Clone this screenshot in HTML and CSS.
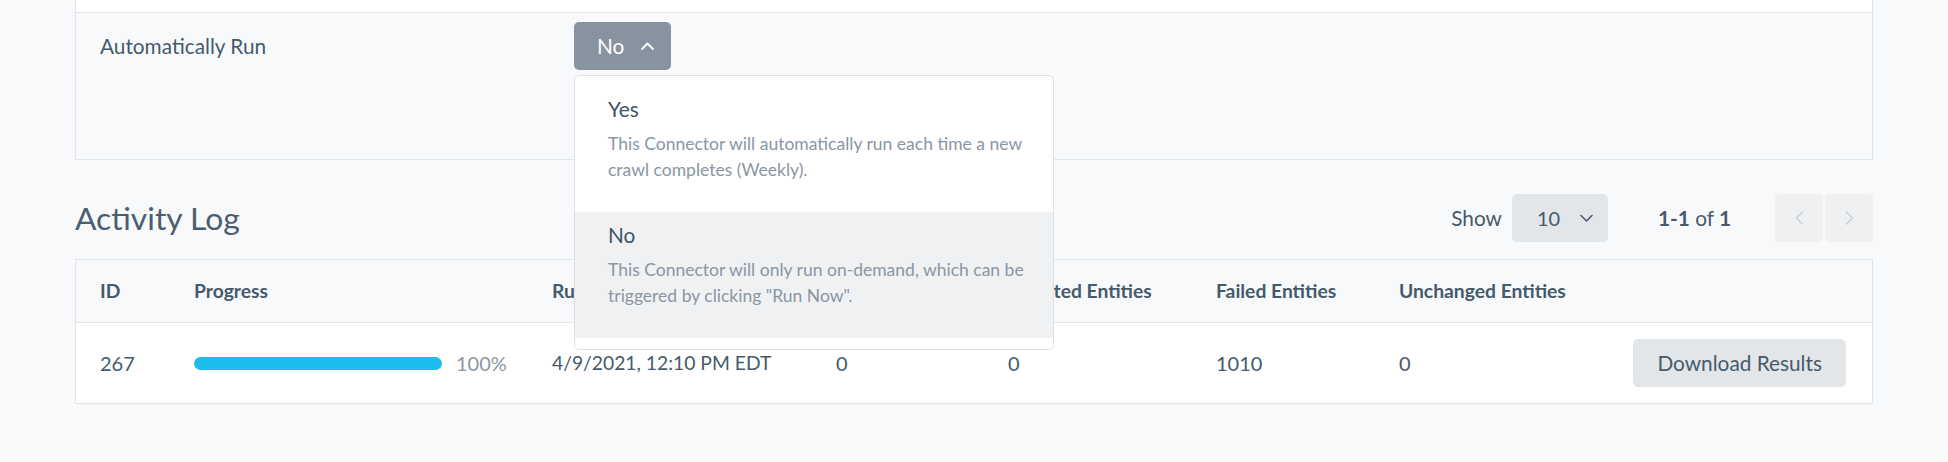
FILE: index.html
```html
<!DOCTYPE html>
<html lang="en">
<head>
<meta charset="utf-8">
<title>Connector Settings</title>
<link rel="stylesheet" href="styles.css">
</head>
<body>
<div class="page">
  <section class="panel">
    <div class="panel-top"></div>
    <div class="setting-row">
      <div class="setting-label">Automatically Run</div>
      <div class="select-wrap">
        <button class="toggle">
          <span>No</span>
          <svg class="chev" width="13" height="8" viewBox="0 0 13 8"><path d="M1 7 L6.5 1.5 L12 7" fill="none" stroke="#ffffff" stroke-width="1.8" stroke-linecap="round" stroke-linejoin="round"/></svg>
        </button>
        <div class="menu">
          <div class="menu-item">
            <div class="item-title">Yes</div>
            <div class="item-desc">This Connector will automatically run each time a new crawl completes (Weekly).</div>
          </div>
          <div class="menu-item active">
            <div class="item-title">No</div>
            <div class="item-desc">This Connector will only run on-demand, which can be triggered by clicking "Run Now".</div>
          </div>
        </div>
      </div>
    </div>
  </section>

  <div class="log-header">
    <h2 class="log-title">Activity Log</h2>
    <div class="controls">
      <span class="show-label">Show</span>
      <div class="per-page">
        <span class="num">10</span>
        <svg class="chev" width="13" height="8" viewBox="0 0 13 8"><path d="M1 1.5 L6.5 7 L12 1.5" fill="none" stroke="#4a5d6e" stroke-width="1.6" stroke-linecap="round" stroke-linejoin="round"/></svg>
      </div>
      <div class="count"><b>1-1</b> of <b>1</b></div>
      <div class="pager">
        <button class="page-btn"><svg width="9" height="14" viewBox="0 0 9 14"><path d="M7.5 1 L1.5 7 L7.5 13" fill="none" stroke="#c9ced4" stroke-width="1.5" stroke-linecap="round" stroke-linejoin="round"/></svg></button>
        <button class="page-btn"><svg width="9" height="14" viewBox="0 0 9 14"><path d="M1.5 1 L7.5 7 L1.5 13" fill="none" stroke="#c9ced4" stroke-width="1.5" stroke-linecap="round" stroke-linejoin="round"/></svg></button>
      </div>
    </div>
  </div>

  <div class="table">
    <div class="row head">
      <div>ID</div>
      <div>Progress</div>
      <div>Run Date</div>
      <div>Created Entities</div>
      <div>Updated Entities</div>
      <div>Failed Entities</div>
      <div>Unchanged Entities</div>
      <div></div>
    </div>
    <div class="row body">
      <div class="num">267</div>
      <div class="progress"><span class="bar"></span><span class="pct num">100%</span></div>
      <div class="num date">4/9/2021, 12:10 PM EDT</div>
      <div class="num">0</div>
      <div class="num">0</div>
      <div class="num">1010</div>
      <div class="num">0</div>
      <div><button class="download">Download Results</button></div>
    </div>
  </div>
</div>
</body>
</html>
```

FILE: styles.css
```css
* { box-sizing: border-box; }

html, body {
  margin: 0;
  padding: 0;
  background: #f8f9fb;
  font-family: Lato, "Open Sans", "Liberation Sans", sans-serif;
  color: #465a6b;
  font-size: 20.8px;
  line-height: 24px;
}

.page {
  padding: 0 75px;
  height: 462px;
  overflow: hidden;
}

.num {
  font-size: 20px;
}

.date {
  font-size: 19.3px;
}

.panel {
  border-left: 1px solid #e1e4e8;
  border-right: 1px solid #e1e4e8;
  border-bottom: 1px solid #e1e4e8;
}

.panel-top {
  height: 13px;
  background: #ffffff;
  border-bottom: 1px solid #e1e4e8;
}

.setting-row {
  display: flex;
  align-items: flex-start;
  height: 146px;
  padding: 9px 0 0 24px;
  background: #f8f9fb;
}

.setting-label {
  width: 474px;
  padding-top: 12px;
}

.select-wrap {
  position: relative;
}

.toggle {
  display: inline-flex;
  align-items: center;
  gap: 17px;
  height: 48px;
  padding: 0 17px 0 23px;
  border: none;
  border-radius: 5px;
  background: #8794a0;
  color: #ffffff;
  font: inherit;
  cursor: pointer;
}

.menu {
  position: absolute;
  top: 53px;
  left: 0;
  width: 480px;
  padding: 10px 0 11px;
  background: #ffffff;
  border: 1px solid #dde1e6;
  border-radius: 5px;
  z-index: 10;
}

.menu-item {
  height: 126px;
  padding: 11px 24px 0 33px;
}

.menu-item.active {
  background: #f0f1f3;
}

.item-title {
  font-size: 20.8px;
  line-height: 24px;
  color: #3f5366;
}

.item-desc {
  margin-top: 10px;
  font-size: 17.5px;
  line-height: 26px;
  color: #8a96a3;
}

.log-header {
  display: flex;
  align-items: center;
  justify-content: space-between;
  height: 50px;
  margin-top: 33px;
}

.log-title {
  margin: 0;
  font-size: 31.8px;
  line-height: 39px;
  font-weight: 400;
  color: #4a5e6f;
}

.controls {
  display: flex;
  align-items: center;
}

.show-label {
  margin-right: 10px;
}

.per-page {
  display: flex;
  align-items: center;
  gap: 20px;
  width: 96px;
  height: 48px;
  padding-left: 25px;
  background: #e2e6e9;
  border-radius: 5px;
}

.count {
  margin-left: 50px;
}

.count b {
  font-weight: 700;
}

.pager {
  display: flex;
  gap: 2px;
  margin-left: 44px;
}

.page-btn {
  display: flex;
  align-items: center;
  justify-content: center;
  width: 48px;
  height: 48px;
  padding: 0;
  border: none;
  border-radius: 4px;
  background: #eef0f2;
}

.table {
  margin-top: 16px;
  background: #ffffff;
  border: 1px solid #e1e4e8;
}

.row {
  display: grid;
  grid-template-columns: 94px 358px 284px 172px 208px 183px 1fr auto;
  align-items: center;
  padding: 0 26px 0 24px;
}

.row.head {
  height: 63px;
  background: #f8f9fb;
  border-bottom: 1px solid #e1e4e8;
  font-weight: 700;
  font-size: 19.3px;
}

.row.body {
  height: 80px;
}

.progress {
  display: flex;
  align-items: center;
  gap: 14px;
}

.bar {
  display: block;
  width: 248px;
  height: 13px;
  border-radius: 7px;
  background: #1cbdec;
}

.pct {
  color: #8c97a3;
}

.download {
  height: 48px;
  padding: 0 24px;
  border: none;
  border-radius: 5px;
  background: #e2e6e9;
  color: #465a6b;
  font: inherit;
}
```
